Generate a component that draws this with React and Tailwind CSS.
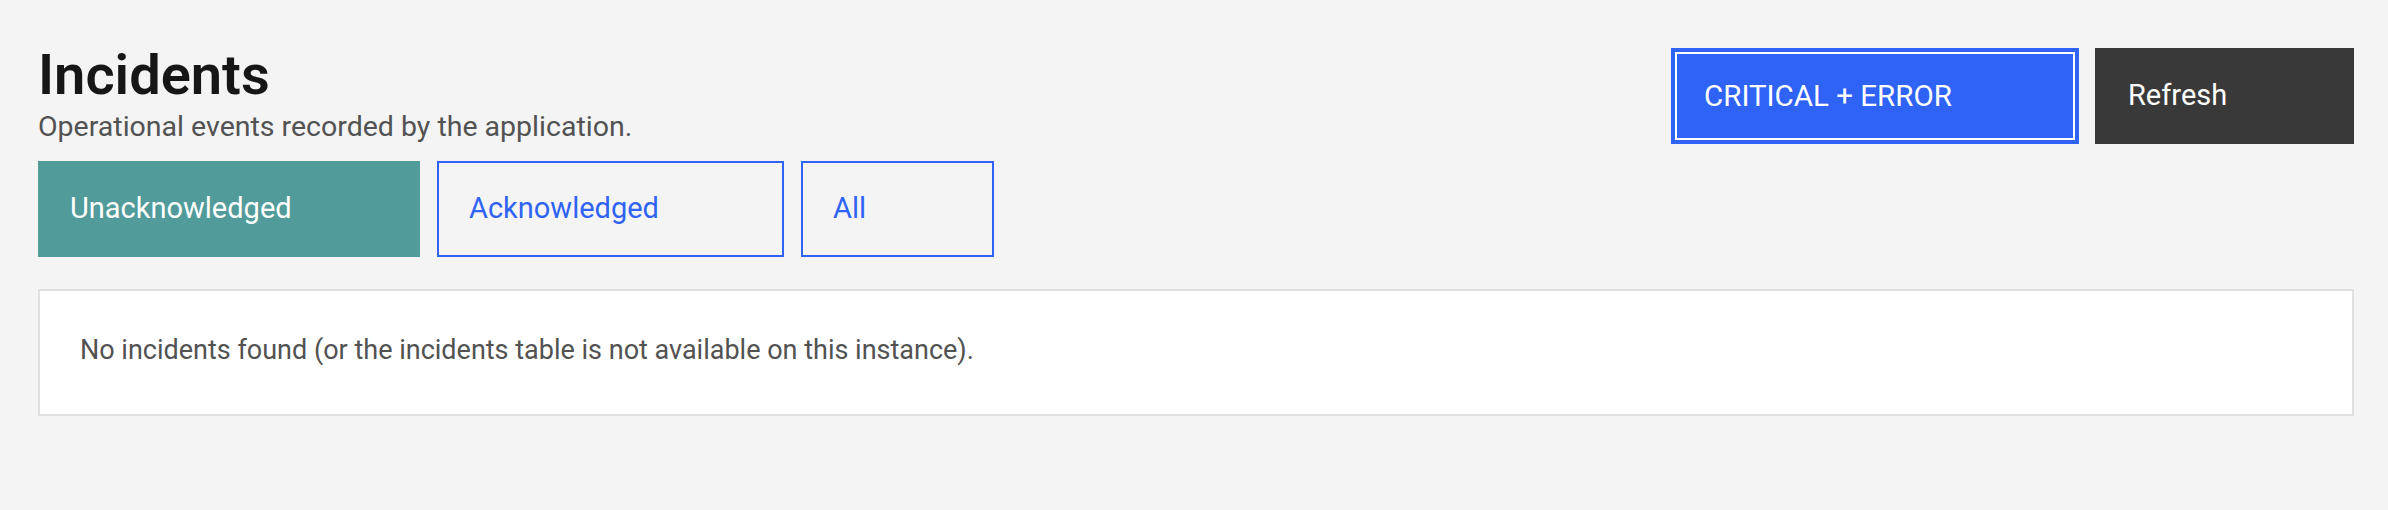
// App.jsx - Incidents page

const tabs = [
  { label: "Unacknowledged", width: "w-[382px]", active: true },
  { label: "Acknowledged", width: "w-[347px]", active: false },
  { label: "All", width: "w-[193px]", active: false },
];

function TabButton({ label, width, active }) {
  if (active) {
    return (
      <button className={`${width} h-[96px] bg-[#519b9b] text-white text-left pl-[32px] text-[29px]`}>
        {label}
      </button>
    );
  }
  return (
    <button className={`${width} h-[96px] border-2 border-[#2f63f5] text-[#2f63f5] text-left pl-[30px] text-[29px]`}>
      {label}
    </button>
  );
}

export default function App() {
  return (
    <div
      className="min-h-screen bg-[#f4f4f4] pl-[38px] pr-[34px] pt-[43px]"
      style={{ fontFamily: "Roboto, 'Noto Sans', sans-serif" }}
    >
      {/* Header */}
      <div className="flex justify-between items-start">
        <div>
          <h1 className="text-[56px] leading-[64px] font-semibold text-[#161616]">Incidents</h1>
          <p className="text-[28.5px] leading-[40px] text-[#525252]">
            Operational events recorded by the application.
          </p>
          <div className="flex gap-[17px] mt-[14px]">
            {tabs.map((t) => (
              <TabButton key={t.label} {...t} />
            ))}
          </div>
        </div>
        <div className="flex gap-[16px] mt-[5px]">
          <button className="w-[408px] h-[96px] bg-[#2f63f5] border-4 border-[#2f63f5] shadow-[inset_0_0_0_2px_#ffffff] text-white text-left pl-[29px] text-[29.5px]">
            CRITICAL + ERROR
          </button>
          <button className="w-[259px] h-[96px] bg-[#393939] text-white text-left pl-[33px] text-[29px]">
            Refresh
          </button>
        </div>
      </div>

      {/* Empty state */}
      <div className="mt-[32px] bg-white border-2 border-[#e0e0e0] px-[40px] pt-[39px] pb-[44px]">
        <p className="text-[27px] leading-[40px] text-[#525252]">
          No incidents found (or the incidents table is not available on this instance).
        </p>
      </div>
    </div>
  );
}
